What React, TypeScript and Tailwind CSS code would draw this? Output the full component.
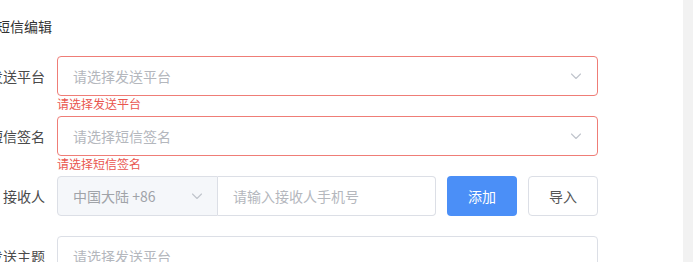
import React from "react";

const Chevron = ({ className = "" }: { className?: string }) => (
  <svg className={className} width="12" height="12" viewBox="0 0 12 12" fill="none">
    <path d="M1.5 4 L6 8.5 L10.5 4" stroke="#c0c4cc" strokeWidth="1.1" strokeLinecap="round" strokeLinejoin="round" />
  </svg>
);

const Label = ({ text }: { text: string }) => (
  <div className="w-[90px] shrink-0 pr-[12px] text-right text-[14px] leading-[40px] text-[#4a4a4a] whitespace-nowrap">
    {text}
  </div>
);

const ErrSelect = ({ placeholder, error }: { placeholder: string; error: string }) => (
  <div className="flex h-[40px] mb-[20px]">
    <Label text={placeholder === "请选择发送平台" ? "发送平台" : "短信签名"} />
    <div className="relative w-[541px]">
      <div className="flex h-[40px] items-center justify-between rounded-[4px] border border-[#ef7d77] bg-white pl-[15px] pr-[15px]">
        <span className="text-[14px] text-[#b4b7bd]">{placeholder}</span>
        <Chevron />
      </div>
      <div className="absolute left-0 top-full pt-[2px] text-[12px] leading-[12px] text-[#e9564f]">{error}</div>
    </div>
  </div>
);

export default function App() {
  return (
    <div
      className="flex h-[262px] w-[693px] overflow-hidden bg-white"
      style={{ fontFamily: '"Noto Sans CJK SC", "Noto Sans", sans-serif' }}
    >
      <div className="flex-1 -ml-[33px]">
        <div className="pt-[17px] pl-[29px] text-[14px] leading-[18px] text-[#333]">短信编辑</div>
        <div className="mt-[21px]">
          <ErrSelect placeholder="请选择发送平台" error="请选择发送平台" />
          <ErrSelect placeholder="请选择短信签名" error="请选择短信签名" />
          <div className="flex h-[40px] mb-[20px]">
            <Label text="接收人" />
            <div className="flex w-[379px]">
              <div className="flex w-[161px] items-center justify-between rounded-l-[4px] border border-[#dcdfe6] bg-[#f5f7fa] pl-[15px] pr-[14px]">
                <span className="text-[14px] text-[#a0a3a8]">中国大陆 +86</span>
                <Chevron />
              </div>
              <div className="flex flex-1 items-center rounded-r-[4px] border border-l-0 border-[#dcdfe6] bg-white pl-[15px]">
                <span className="text-[14px] text-[#b4b7bd]">请输入接收人手机号</span>
              </div>
            </div>
            <button className="ml-[11px] h-[40px] w-[70px] rounded-[4px] bg-[#4b8ff7] text-[14px] text-white">添加</button>
            <button className="ml-[11px] h-[40px] w-[70px] rounded-[4px] border border-[#dcdfe6] bg-white text-[14px] text-[#555]">导入</button>
          </div>
          <div className="flex h-[40px]">
            <Label text="发送主题" />
            <div className="flex h-[40px] w-[541px] items-center rounded-[4px] border border-[#dcdfe6] bg-white pl-[15px]">
              <span className="text-[14px] text-[#b4b7bd]">请选择发送平台</span>
            </div>
          </div>
        </div>
      </div>
      <div className="w-[10px] shrink-0 bg-[#f2f2f2]" />
    </div>
  );
}
